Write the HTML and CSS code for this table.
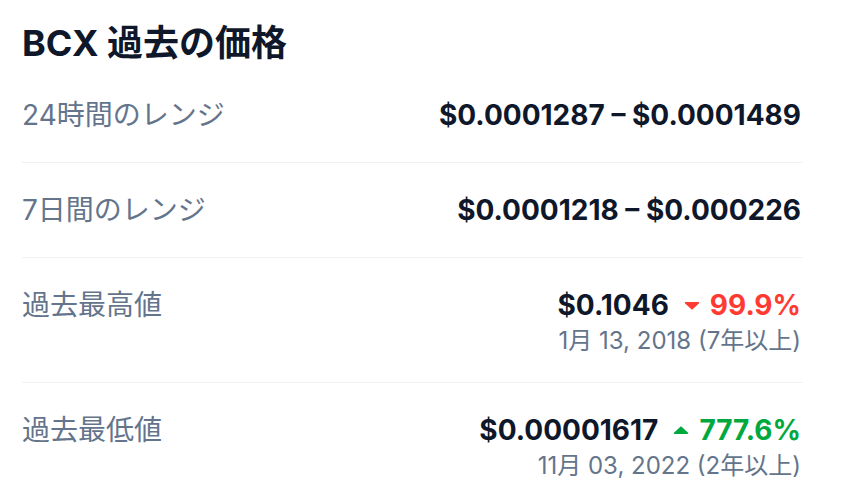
FILE: index.html
```html
<!DOCTYPE html>
<html lang="ja">
<head>
<meta charset="utf-8">
<link rel="stylesheet" href="styles.css">
</head>
<body>
<section class="panel">
  <h2 class="title">BCX 過去の価格</h2>
  <div class="row">
    <div class="label">24時間のレンジ</div>
    <div class="value"><span class="price">$0.0001287 – $0.0001489</span></div>
  </div>
  <div class="row">
    <div class="label">7日間のレンジ</div>
    <div class="value"><span class="price">$0.0001218 – $0.000226</span></div>
  </div>
  <div class="row">
    <div class="label">過去最高値</div>
    <div class="value">
      <div class="line"><span class="price">$0.1046</span><span class="change down"><svg class="caret" viewBox="0 0 16 9" width="16" height="9"><path d="M1.5 1h13a.8.8 0 0 1 .6 1.3L8.6 8.3a.8.8 0 0 1-1.2 0L.9 2.3A.8.8 0 0 1 1.5 1z"/></svg>99.9%</span></div>
      <div class="date">1月 13, 2018 (7年以上)</div>
    </div>
  </div>
  <div class="row last">
    <div class="label">過去最低値</div>
    <div class="value">
      <div class="line"><span class="price">$0.00001617</span><span class="change up"><svg class="caret" viewBox="0 0 16 9" width="16" height="9"><path d="M1.5 8h13a.8.8 0 0 0 .6-1.3L8.6.7a.8.8 0 0 0-1.2 0L.9 6.7A.8.8 0 0 0 1.5 8z"/></svg>777.6%</span></div>
      <div class="date">11月 03, 2022 (2年以上)</div>
    </div>
  </div>
</section>
</body>
</html>
```
FILE: styles.css
```css
html, body {
  margin: 0;
  padding: 0;
  background: #ffffff;
}
body {
  font-family: Inter, "Noto Sans CJK JP", sans-serif;
  color: #0f172a;
}
.panel {
  width: 781px;
  padding: 21px 0 0 22px;
}
.title {
  margin: 0;
  font-size: 36px;
  line-height: 44px;
  font-weight: 700;
  color: #0f172a;
  margin-bottom: 3px;
}
.row {
  display: flex;
  justify-content: space-between;
  align-items: flex-start;
  padding: 26px 0;
  border-bottom: 1px solid #eff2f5;
}
.row.last {
  border-bottom: none;
}
.label {
  font-size: 28px;
  line-height: 42px;
  color: #64748b;
}
.value {
  display: flex;
  flex-direction: column;
  align-items: flex-end;
  padding-right: 2px;
}
.line {
  display: flex;
  align-items: center;
  gap: 15px;
}
.price {
  font-size: 28px;
  line-height: 42px;
  font-weight: 700;
  color: #0f172a;
}
.change {
  display: flex;
  align-items: center;
  gap: 10px;
  font-size: 28px;
  line-height: 42px;
  font-weight: 700;
}
.change.down { color: #ff3a33; }
.change.up { color: #00a83e; }
.caret { fill: currentColor; }
.date {
  font-size: 24px;
  line-height: 30px;
  color: #64748b;
}
```
